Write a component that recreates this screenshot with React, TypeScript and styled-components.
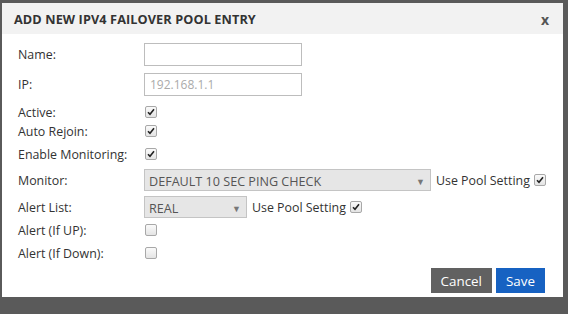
import { FC } from 'react';
import styled, { createGlobalStyle } from 'styled-components';

const Global = createGlobalStyle`
  html, body {
    margin: 0;
    padding: 0;
    background: #5a5a5a;
    font-family: 'Open Sans', 'Liberation Sans', sans-serif;
  }
`;

const Page = styled.div`
  width: 568px;
  height: 314px;
  padding: 3px 0 0 2px;
  box-sizing: border-box;
`;

const Dialog = styled.div`
  width: 561px;
  height: 294px;
  background: #fff;
  display: flex;
  flex-direction: column;
`;

const Header = styled.div`
  height: 31px;
  background: #f2f2f2;
  display: flex;
  align-items: center;
  justify-content: space-between;
  padding: 0 14px 0 12px;
`;

const Title = styled.h3`
  margin: 0;
  font-size: 12.7px;
  font-weight: 700;
  color: #333;
  letter-spacing: 0.1px;
`;

const Close = styled.span`
  font-size: 14px;
  font-weight: 700;
  color: #555;
  margin-top: 2px;
`;

const Body = styled.div`
  padding: 9px 16px 0 16px;
  display: flex;
  flex-direction: column;
`;

const Row = styled.div<{ $h: number; $mt?: number }>`
  height: ${p => p.$h}px;
  margin-top: ${p => p.$mt ?? 0}px;
  display: flex;
  align-items: center;
  font-size: 12.4px;
  color: #333;
`;

const Label = styled.div`
  width: 126px;
  flex: none;
`;

const TextInput = styled.input`
  width: 158px;
  height: 23px;
  box-sizing: border-box;
  border: 1px solid #bdbdbd;
  padding: 0 5px;
  font-family: inherit;
  font-size: 12px;
  color: #333;
  outline: none;
  &::placeholder {
    color: #aaa;
  }
`;

const Select = styled.div<{ $w: number }>`
  width: ${p => p.$w}px;
  height: 22px;
  box-sizing: border-box;
  border: 1px solid #c4c4c4;
  background: #e6e6e6;
  display: flex;
  align-items: center;
  justify-content: space-between;
  padding: 2px 5px 0 4px;
  font-size: 12.6px;
  color: #555;
`;

const Arrow = styled.span`
  font-size: 9px;
  color: #777;
`;

const Inline = styled.span`
  margin-left: 5px;
  display: inline-flex;
  align-items: center;
  gap: 3px;
  color: #333;
`;

const Box = styled.span`
  width: 10px;
  height: 10px;
  border: 1px solid #a8a8a8;
  border-radius: 2px;
  background: linear-gradient(#fafafa, #e4e4e4);
  display: inline-flex;
  align-items: center;
  justify-content: center;
  margin-left: 1px;
`;

const Check: FC<{ checked?: boolean }> = ({ checked }) => (
  <Box>
    {checked ? (
      <svg width="8" height="8" viewBox="0 0 8 8">
        <path d="M1 4.2 L3 6.3 L7 1.3" fill="none" stroke="#222" strokeWidth="1.6" />
      </svg>
    ) : null}
  </Box>
);

const Footer = styled.div`
  display: flex;
  justify-content: flex-end;
  gap: 4px;
  margin-top: 5px;
  padding-right: 18px;
`;

const Button = styled.button<{ $primary?: boolean }>`
  height: 25px;
  border: none;
  padding: 0 10px;
  font-family: inherit;
  font-size: 13.4px;
  color: #fff;
  background: ${p => (p.$primary ? '#1762c2' : '#616161')};
`;

export default function App() {
  return (
    <Page>
      <Global />
      <Dialog>
        <Header>
          <Title>ADD NEW IPV4 FAILOVER POOL ENTRY</Title>
          <Close>x</Close>
        </Header>
        <Body>
          <Row $h={23}>
            <Label>Name:</Label>
            <TextInput />
          </Row>
          <Row $h={23} $mt={7}>
            <Label>IP:</Label>
            <TextInput placeholder="192.168.1.1" />
          </Row>
          <Row $h={20} $mt={6}>
            <Label>Active:</Label>
            <Check checked />
          </Row>
          <Row $h={18}>
            <Label>Auto Rejoin:</Label>
            <Check checked />
          </Row>
          <Row $h={20} $mt={4}>
            <Label>Enable Monitoring:</Label>
            <Check checked />
          </Row>
          <Row $h={22} $mt={5}>
            <Label>Monitor:</Label>
            <Select $w={287}>
              DEFAULT 10 SEC PING CHECK<Arrow>▼</Arrow>
            </Select>
            <Inline>
              Use Pool Setting <Check checked />
            </Inline>
          </Row>
          <Row $h={22} $mt={5}>
            <Label>Alert List:</Label>
            <Select $w={103}>
              REAL<Arrow>▼</Arrow>
            </Select>
            <Inline>
              Use Pool Setting <Check checked />
            </Inline>
          </Row>
          <Row $h={20} $mt={2}>
            <Label>Alert (If UP):</Label>
            <Check />
          </Row>
          <Row $h={20} $mt={3}>
            <Label>Alert (If Down):</Label>
            <Check />
          </Row>
        </Body>
        <Footer>
          <Button>Cancel</Button>
          <Button $primary>Save</Button>
        </Footer>
      </Dialog>
    </Page>
  );
}
